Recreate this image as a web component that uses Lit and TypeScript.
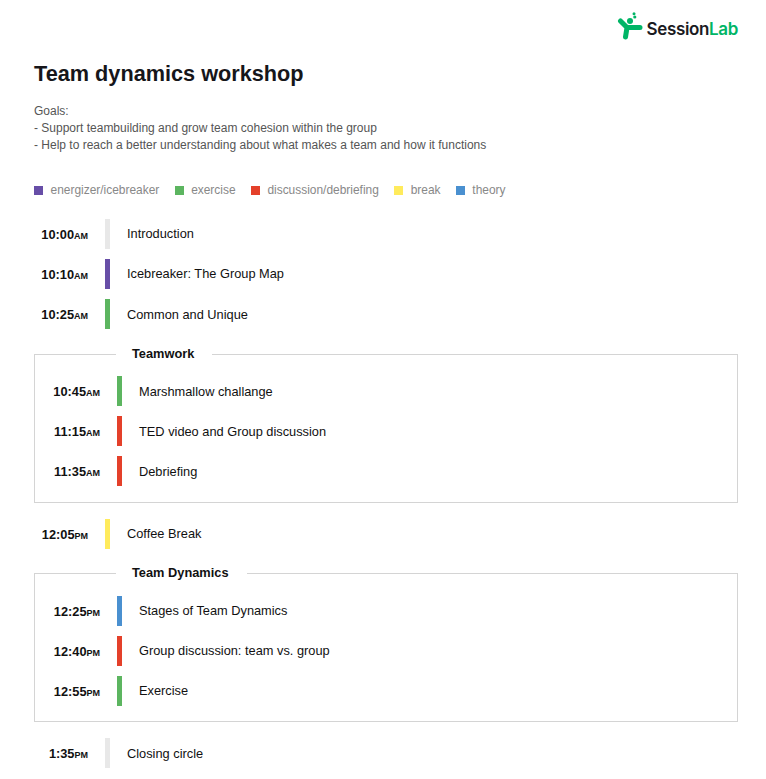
import { LitElement, html, css } from "lit";
import { customElement } from "lit/decorators.js";

type Row = [string, string, string, string, boolean?];
const C = { g: "#e8e8e8", p: "#674ea7", e: "#5cb560", r: "#e4402a", y: "#ffeb5c", b: "#4a90d0" };

const row = (r: Row) => html`<div class="row">
  <div class="time">${r[0]}<span class="ap">${r[1]}</span></div>
  <div class="bar" style="background:${r[2]}"></div>
  <div class="name ${r[4] ? "up" : ""}">${r[3]}</div>
</div>`;

const legend: [string, string][] = [
  [C.p, "energizer/icebreaker"],
  [C.e, "exercise"],
  [C.r, "discussion/debriefing"],
  [C.y, "break"],
  [C.b, "theory"],
];

@customElement("app-root")
export class AppRoot extends LitElement {
  static styles = css`
    :host { display: block; font-family: "Liberation Sans", Arial, sans-serif; color: #111; background: #fff; height: 779px; overflow: hidden; }
    .page { padding: 12px 28px 0 34px; }
    .logo { display: flex; justify-content: flex-end; align-items: flex-end; gap: 4px; height: 28px; }
    .logo svg { width: 26px; height: 28px; display: block; }
    .wordmark { font-family: Inter, sans-serif; font-weight: 600; font-size: 17px; line-height: 20px; letter-spacing: -0.35px; color: #1b1b1f; margin-bottom: 1px; }
    .wordmark span { color: #00b566; }
    h1 { margin: 19px 0 0; font-size: 21.7px; line-height: 30px; font-weight: 700; color: #16161a; }
    .goals { margin: 14px 0 0; font-size: 12px; line-height: 17px; color: #555; }
    .legend { display: flex; gap: 15.3px; margin-top: 28px; font-size: 11.95px; line-height: 16px; color: #888; align-items: center; }
    .legend .item { display: flex; align-items: center; gap: 7.5px; }
    .sw { width: 9px; height: 9px; }
    .list { display: flex; flex-direction: column; gap: 10px; }
    .top { margin-top: 21px; }
    .row { display: flex; align-items: center; height: 30px; font-size: 12.8px; }
    .time { width: 54px; text-align: right; font-weight: 700; font-size: 12.8px; white-space: nowrap; }
    .ap { font-size: 9px; }
    .bar { width: 5px; height: 30px; margin-left: 17px; }
    .name { margin-left: 17px; }
    .name.up { padding-bottom: 2px; }
    fieldset { margin: 0; border: 1px solid #d4d4d4; padding: 15px 0 16px 0; min-width: 0; }
    legend { margin-left: 81px; padding: 0 18px 0 16px; font-size: 12.8px; font-weight: 700; line-height: 14px; }
    fieldset .row { padding-left: 11px; }
    .second { padding-top: 16px; padding-bottom: 15px; }
    .teamwork { margin-top: 18px; }
    .mid { margin: 16px 0 17px; }
    .last { margin-top: 16px; }
  `;

  render() {
    return html`<div class="page">
      <div class="logo">
        <svg viewBox="0 0 26 28" aria-hidden="true">
          <path d="M3.5 9 L10 15.5 L23 15.5 M10 15.5 L8.5 25" fill="none" stroke="#00b566" stroke-width="5" stroke-linecap="round" stroke-linejoin="round"/>
          <circle cx="13" cy="9" r="3" fill="#00b566"/>
          <circle cx="17.8" cy="5" r="1.6" fill="#00b566"/>
          <circle cx="17" cy="1.7" r="1.5" fill="#00b566"/>
        </svg>
        <div class="wordmark">Session<span>Lab</span></div>
      </div>
      <h1>Team dynamics workshop</h1>
      <p class="goals">Goals:<br>- Support teambuilding and grow team cohesion within the group<br>- Help to reach a better understanding about what makes a team and how it functions</p>
      <div class="legend">
        ${legend.map((l) => html`<div class="item"><div class="sw" style="background:${l[0]}"></div>${l[1]}</div>`)}
      </div>
      <div class="list top">
        ${row(["10:00", "AM", C.g, "Introduction", true])}
        ${row(["10:10", "AM", C.p, "Icebreaker: The Group Map", true])}
        ${row(["10:25", "AM", C.e, "Common and Unique"])}
      </div>
      <fieldset class="teamwork">
        <legend>Teamwork</legend>
        <div class="list">
          ${row(["10:45", "AM", C.e, "Marshmallow challange"])}
          ${row(["11:15", "AM", C.r, "TED video and Group discussion"])}
          ${row(["11:35", "AM", C.r, "Debriefing"])}
        </div>
      </fieldset>
      <div class="mid">${row(["12:05", "PM", C.y, "Coffee Break", true])}</div>
      <fieldset class="second">
        <legend>Team Dynamics</legend>
        <div class="list">
          ${row(["12:25", "PM", C.b, "Stages of Team Dynamics", true])}
          ${row(["12:40", "PM", C.r, "Group discussion: team vs. group", true])}
          ${row(["12:55", "PM", C.e, "Exercise", true])}
        </div>
      </fieldset>
      <div class="last">${row(["1:35", "PM", C.g, "Closing circle"])}</div>
    </div>`;
  }
}
